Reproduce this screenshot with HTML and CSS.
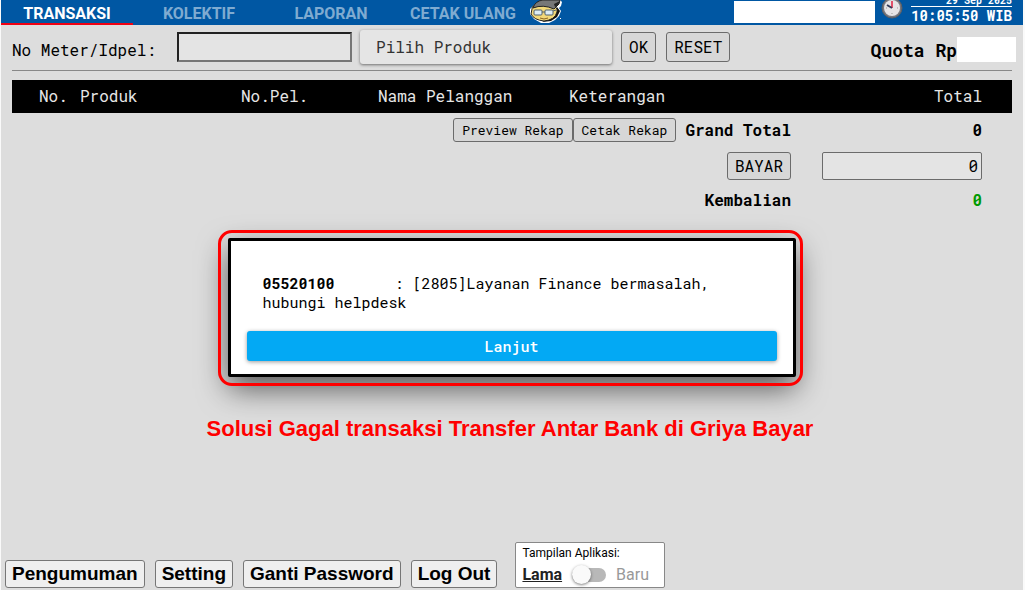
FILE: index.html
```
<!DOCTYPE html>
<html lang="id">
<head>
  <meta charset="utf-8">
  <title>Griya Bayar - Transaksi</title>
  <link rel="stylesheet" href="styles.css">
</head>
<body>
  <header class="topbar">
    <nav class="tabs">
      <a href="#transaksi" class="active">TRANSAKSI</a>
      <a href="#kolektif">KOLEKTIF</a>
      <a href="#laporan">LAPORAN</a>
      <a href="#cetak">CETAK ULANG</a>
    </nav>
    <svg class="mascot" width="34" height="25" viewBox="0 0 34 25">
      <path d="M4 6 L12 0 H31 L33 2 L32 6 L30 8 L32 11 L30 16 L26 20 L20 23 H12 L5 19 L1 14 V9 Z" fill="#fff"/>
      <path d="M28 7 L31 11 L28 17 L22 21 L13 22 L22 17 Z" fill="#111"/>
      <path d="M3 9 Q3 5 8 5 H23 Q29 7 28 12 Q26 20 15 21 Q5 20 2 14 Z" fill="#f3d878" stroke="#222" stroke-width="1"/>
      <path d="M4 8 Q6 1 14 0 H31 L30 4 L25 9 Q14 4 4 8 Z" fill="#777" stroke="#222" stroke-width="1"/>
      <path d="M25 4 L31 1 L29 5 L26 7 Z" fill="#222"/>
      <rect x="5" y="10" width="8" height="5" rx="1" fill="#dcecf5" stroke="#50616c"/>
      <rect x="16" y="10" width="8" height="5" rx="1" fill="#dcecf5" stroke="#50616c"/>
      <path d="M13 12 H16 M24 11 L27 10" stroke="#50616c"/>
      <path d="M11 18 Q15 20 19 18" fill="none" stroke="#8a6421"/>
      <rect x="31" y="18" width="1" height="1" fill="#fff"/>
    </svg>
    <div class="account"></div>
    <svg class="clock" width="22" height="22" viewBox="0 0 22 22">
      <circle cx="11" cy="8" r="10" fill="#77777d" stroke="#5d5e63"/>
      <circle cx="11" cy="8" r="8" fill="#e6e4e6"/>
      <path d="M11 2v1M11 13v1M5 8h1M16 8h1" stroke="#999"/>
      <path d="M11 8 V1" stroke="#e2506a" stroke-width="2"/>
      <path d="M11 8 L6 5" stroke="#333b58" stroke-width="2"/>
    </svg>
    <div class="datetime">
      <span class="date">29 Sep 2025</span>
      <span class="time">10:05:50 WIB</span>
    </div>
  </header>

  <main>
    <form class="search">
      <label for="idpel">No Meter/Idpel:</label>
      <input type="text" id="idpel" class="idpel">
      <select class="produk" aria-label="Produk">
        <option>Pilih Produk</option>
      </select>
      <button type="button" class="btn">OK</button>
      <button type="reset" class="btn">RESET</button>
      <div class="quota">Quota Rp<span class="saldo"></span></div>
    </form>

    <table class="transaksi">
      <colgroup>
        <col class="col-no"><col class="col-produk"><col class="col-pel"><col class="col-nama"><col><col class="col-total">
      </colgroup>
      <thead>
        <tr>
          <th class="no">No.</th>
          <th>Produk</th>
          <th>No.Pel.</th>
          <th>Nama Pelanggan</th>
          <th>Keterangan</th>
          <th class="total">Total</th>
        </tr>
      </thead>
      <tbody>
        <tr>
          <td colspan="5">
            <div class="rekap">
              <button type="button" class="btn small">Preview Rekap</button>
              <button type="button" class="btn small">Cetak Rekap</button>
              <b>Grand Total</b>
            </div>
          </td>
          <td class="total"><b>0</b></td>
        </tr>
        <tr class="baris-bayar">
          <td colspan="5"><button type="button" class="btn bayar">BAYAR</button></td>
          <td class="total"><input type="text" class="jumlah" value="0" aria-label="Jumlah bayar"></td>
        </tr>
        <tr>
          <td colspan="5"><b>Kembalian</b></td>
          <td class="total kembali"><b>0</b></td>
        </tr>
      </tbody>
    </table>
  </main>

  <div class="popup">
    <div class="ring">
      <div class="dialog" role="dialog" aria-label="Pesan">
        <p><b>05520100</b><span class="pesan">: [2805]Layanan Finance bermasalah,</span><br>hubungi helpdesk</p>
        <button type="button" class="lanjut">Lanjut</button>
      </div>
    </div>
    <div class="caption">Solusi Gagal transaksi Transfer Antar Bank di Griya Bayar</div>
  </div>

  <footer>
    <button type="button">Pengumuman</button>
    <button type="button">Setting</button>
    <button type="button">Ganti Password</button>
    <button type="button">Log Out</button>
    <div class="tampilan">
      <div class="judul">Tampilan Aplikasi:</div>
      <label class="switch">
        <span class="lama">Lama</span>
        <input type="checkbox">
        <span class="baru">Baru</span>
      </label>
    </div>
  </footer>
</body>
</html>
```
FILE: styles.css
```
:root {
  --blue: #0057a3;
  --bg: #dddddd;
  --mono: "Roboto Mono", "DejaVu Sans Mono", monospace;
}

* {
  box-sizing: border-box;
}

body {
  margin: 0;
  min-height: 100vh;
  display: flex;
  flex-direction: column;
  position: relative;
  background: var(--bg);
  border-left: 1px solid #fafafa;
  border-right: 2px solid #fafafa;
  font-family: var(--mono);
  font-size: 16px;
  color: #000;
}

button,
input,
select {
  font-family: inherit;
  font-size: 16px;
  color: #000;
}

/* top bar */
.topbar {
  display: flex;
  height: 25px;
  overflow: hidden;
  background: var(--blue);
  padding-right: 11px;
}

.tabs {
  display: flex;
}

.tabs a {
  width: 132px;
  height: 25px;
  line-height: 27px;
  text-align: center;
  text-decoration: none;
  font-family: Roboto, sans-serif;
  font-size: 16px;
  font-weight: 700;
  color: #7fabd1;
}

.tabs a.active {
  color: #fff;
  border-bottom: 2px solid #f00012;
}

.account {
  width: 141px;
  height: 22px;
  margin: 1px 6px 0 auto;
  background: #fff;
}

.clock {
  margin-right: 8px;
}

.datetime {
  display: flex;
  flex-direction: column;
  justify-content: flex-end;
  text-align: right;
  color: #fff;
  font-weight: 700;
}

.date {
  font-size: 10px;
  line-height: 10px;
  border-bottom: 1px solid #fff;
}

.time {
  font-size: 14px;
  line-height: 18px;
}

/* search row */
main {
  padding: 4px 11px 0;
}

.search {
  display: flex;
  align-items: center;
  height: 42px;
  border-bottom: 1px solid #888;
  padding-bottom: 6px;
}

.search label,
.quota {
  margin-top: 6px;
}

.idpel {
  width: 175px;
  height: 30px;
  margin: 0 8px 0 21px;
  border: 2px inset #767676;
  background: #e4e4e4;
}

.produk {
  appearance: none;
  width: 252px;
  height: 34px;
  margin-right: 9px;
  padding: 0 16px;
  border: none;
  border-radius: 3px;
  background: #e5e5e5;
  box-shadow: 0 1px 3px rgba(0, 0, 0, 0.5);
  color: #333;
}

.btn {
  height: 30px;
  padding: 0 7px;
  border: 1px solid #6b6b6b;
  border-radius: 3px;
  background: #d7d7d7;
}

.search .btn {
  margin-right: 10px;
}

.quota {
  display: flex;
  align-items: center;
  margin-left: auto;
  margin-right: -4px;
  font-size: 18px;
  font-weight: 700;
}

.saldo {
  width: 59px;
  height: 25px;
  background: #fff;
}

/* transactions */
.transaksi {
  width: 100%;
  margin-top: 9px;
  table-layout: fixed;
  border-collapse: collapse;
}

.col-no { width: 68px; }
.col-produk { width: 161px; }
.col-pel { width: 137px; }
.col-nama { width: 191px; }
.col-total { width: 221px; }

th {
  height: 33px;
  padding: 0 0 2px;
  background: #000;
  color: #e6e6e6;
  font-weight: 400;
  text-align: left;
}

th.no {
  padding-left: 27px;
}

td {
  height: 35px;
  padding: 0 0 2px;
  text-align: right;
}

.baris-bayar td {
  padding-bottom: 0;
}

th.total,
td.total {
  padding-right: 30px;
  text-align: right;
}

.rekap {
  display: flex;
  justify-content: flex-end;
  align-items: center;
}

.rekap b {
  margin-left: 9px;
}

.small {
  height: 24px;
  padding: 0 8px;
  font-size: 13px;
}

.bayar {
  height: 28px;
}

.jumlah {
  width: 160px;
  height: 28px;
  padding: 0 3px;
  border: 1px solid #6b6b6b;
  border-radius: 2px;
  background: #e4e4e4;
  text-align: right;
}

.kembali {
  color: #009a00;
}

/* popup */
.popup {
  position: absolute;
  z-index: 1;
  top: 230px;
  left: 0;
  right: 0;
  display: flex;
  flex-direction: column;
  align-items: center;
  padding-right: 4px;
}

.ring {
  width: 585px;
  padding: 5px 4px 6px 7px;
  border: 3px solid #f00;
  border-radius: 14px;
  pointer-events: none;
}

/* below the ring so its shadow does not darken the red line */
.dialog {
  position: relative;
  z-index: -1;
  padding: 33px 16px 13px;
  border: 3px solid #000;
  border-radius: 2px;
  background: #fff;
  box-shadow: 0 12px 30px rgba(0, 0, 0, 0.6);
  pointer-events: auto;
}

.dialog p {
  margin: 0 16px 19px;
  font-size: 15px;
  line-height: 19px;
}

.pesan {
  margin-left: 60px;
}

.lanjut {
  display: block;
  width: 100%;
  height: 30px;
  border: none;
  border-radius: 3px;
  background: #03a9f4;
  box-shadow: 0 1px 4px rgba(0, 0, 0, 0.4);
  color: #fff;
  font-size: 15px;
  font-weight: 500;
}

.caption {
  margin-top: 30px;
  font: 700 22px/26px "Liberation Sans", Arial, sans-serif;
  color: #f00;
}

/* footer */
footer {
  display: flex;
  align-items: flex-end;
  gap: 10px;
  margin-top: auto;
  padding: 0 4px 2px;
}

footer button {
  height: 28px;
  padding: 0 6px;
  border: 1px solid #767676;
  border-radius: 3px;
  background: #efefef;
  font: 700 19px "Liberation Sans", Arial, sans-serif;
}

.tampilan {
  width: 150px;
  height: 46px;
  margin-left: 8px;
  padding: 2px 6px;
  border: 1px solid #888;
  border-radius: 2px;
  background: #fff;
  font-family: Roboto, sans-serif;
}

.judul {
  font-size: 12px;
  line-height: 16px;
}

.switch {
  display: flex;
  align-items: center;
  height: 27px;
}

.lama {
  font-weight: 700;
  text-decoration: underline;
  color: #222;
}

.baru {
  color: #999;
}

.switch input {
  appearance: none;
  display: flex;
  align-items: center;
  width: 34px;
  height: 14px;
  margin: 0 10px;
  border-radius: 7px;
  background: #b8b8b8;
}

.switch input::before {
  content: "";
  width: 19px;
  height: 19px;
  flex: none;
  border-radius: 50%;
  background: #fafafa;
  box-shadow: 0 1px 3px rgba(0, 0, 0, 0.5);
}

.switch input:checked::before {
  margin-left: auto;
}
```
